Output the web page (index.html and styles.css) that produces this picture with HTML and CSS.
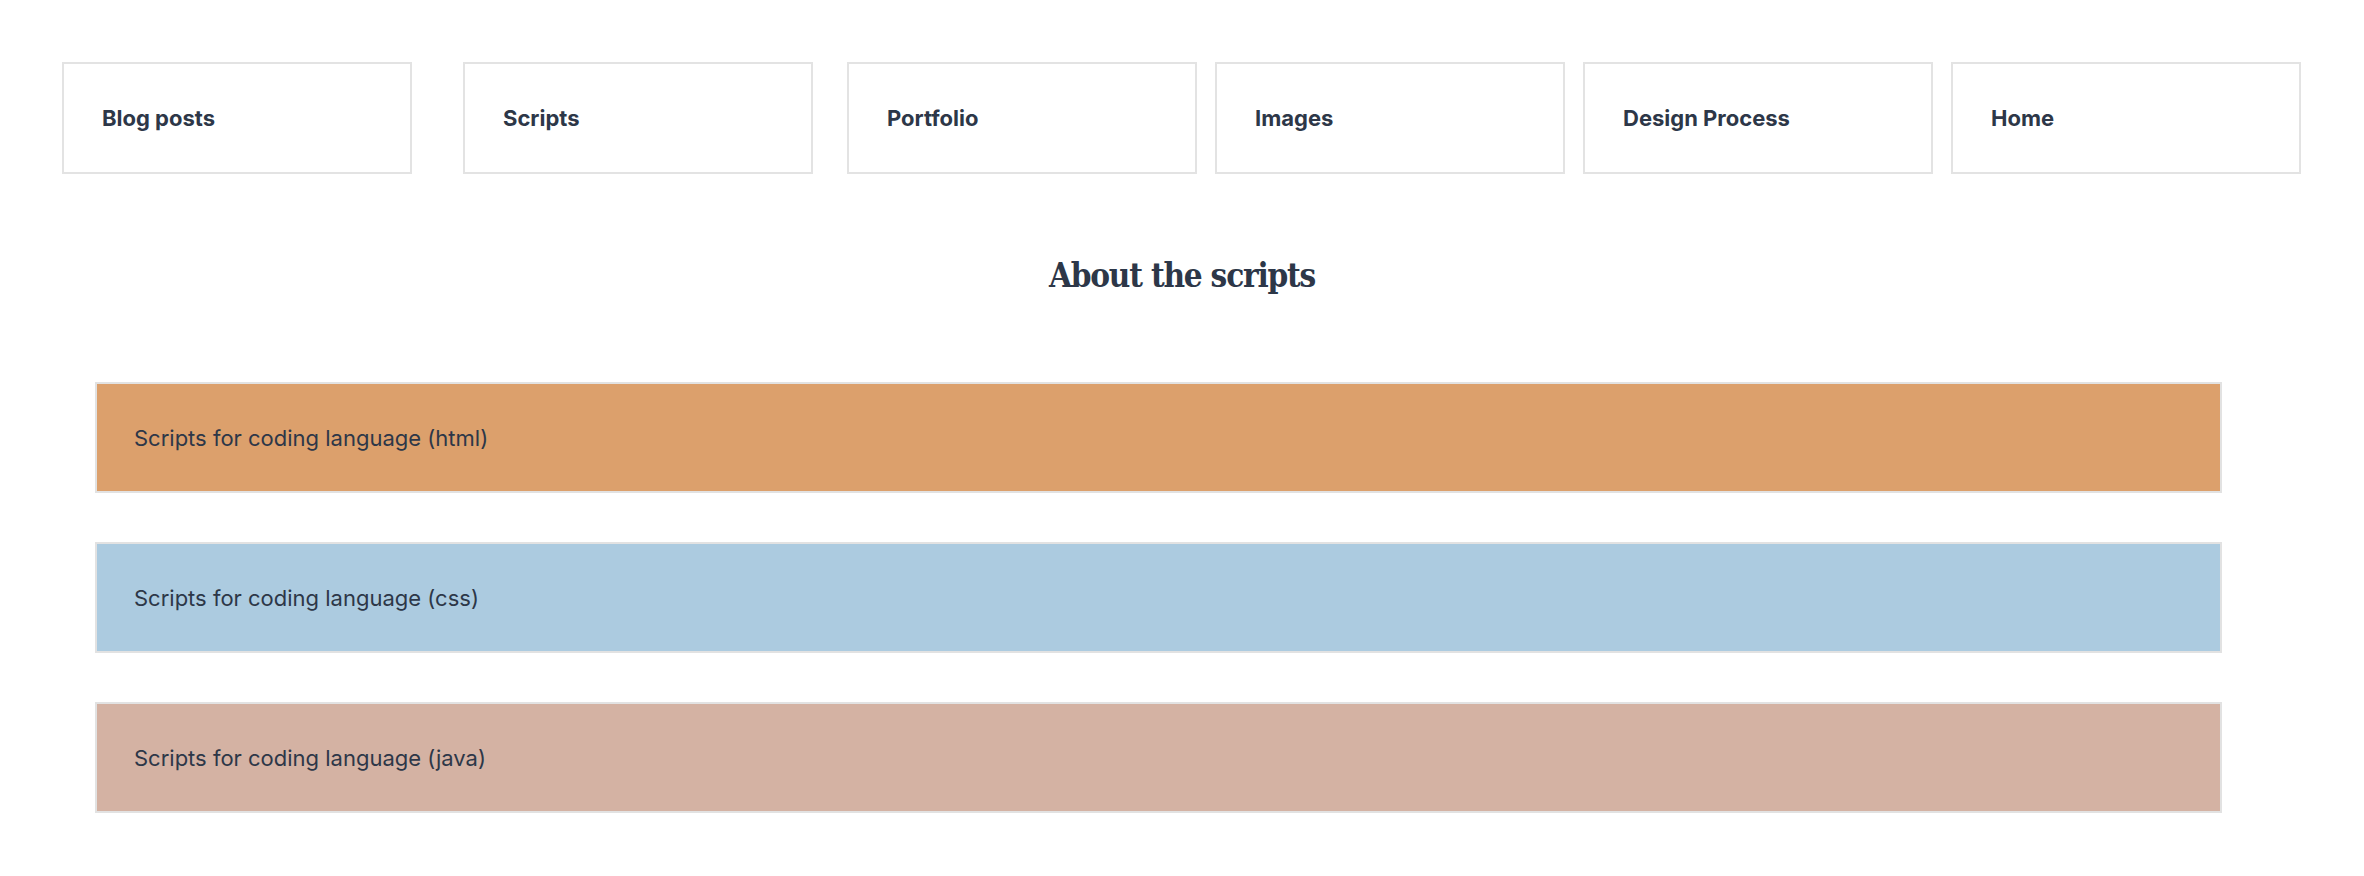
FILE: index.html
```html
<!DOCTYPE html>
<html lang="en">
<head>
<meta charset="utf-8">
<title>About the scripts</title>
<link rel="stylesheet" href="styles.css">
</head>
<body>
<nav class="nav">
  <a class="nav-item nav-item--wide" href="#">Blog posts</a>
  <a class="nav-item nav-item--mid" href="#">Scripts</a>
  <a class="nav-item" href="#">Portfolio</a>
  <a class="nav-item" href="#">Images</a>
  <a class="nav-item" href="#">Design Process</a>
  <a class="nav-item" href="#">Home</a>
</nav>
<h1 class="title">About the scripts</h1>
<section class="scripts">
  <div class="script script--html">Scripts for coding language (html)</div>
  <div class="script script--css">Scripts for coding language (css)</div>
  <div class="script script--java">Scripts for coding language (java)</div>
</section>
</body>
</html>
```
FILE: styles.css
```css
* { box-sizing: border-box; }
html, body { margin: 0; padding: 0; background: #ffffff; }
body {
  font-family: Inter, "Liberation Sans", sans-serif;
  color: #2d3748;
  width: 2364px;
}
.nav {
  display: flex;
  gap: 18px;
  padding: 62px 0 0 62px;
}
.nav-item {
  display: flex;
  align-items: center;
  width: 350px;
  height: 112px;
  padding-left: 38px;
  border: 2px solid #e3e3e3;
  font-size: 22px;
  font-weight: 700;
  color: #2d3748;
  text-decoration: none;
}
.nav-item--wide { margin-right: 33px; }
.nav-item--mid { margin-right: 16px; }
.title {
  margin: 80px 0 0 0;
  text-align: center;
  font-family: "DejaVu Serif Condensed", "DejaVu Serif", "Liberation Serif", serif;
  font-stretch: condensed;
  font-weight: 700;
  font-size: 33px;
  letter-spacing: -1.2px;
  line-height: 43px;
  color: #2d3748;
}
.scripts {
  display: flex;
  flex-direction: column;
  gap: 49px;
  margin: 85px 0 0 95px;
  width: 2127px;
}
.script {
  display: flex;
  align-items: center;
  height: 111px;
  padding-left: 37px;
  border: 2px solid #e2e2e2;
  font-size: 22px;
  font-weight: 400;
  color: #2d3748;
}
.script--html { background: #dca06c; }
.script--css { background: #accbe0; }
.script--java { background: #d4b2a3; }
```
